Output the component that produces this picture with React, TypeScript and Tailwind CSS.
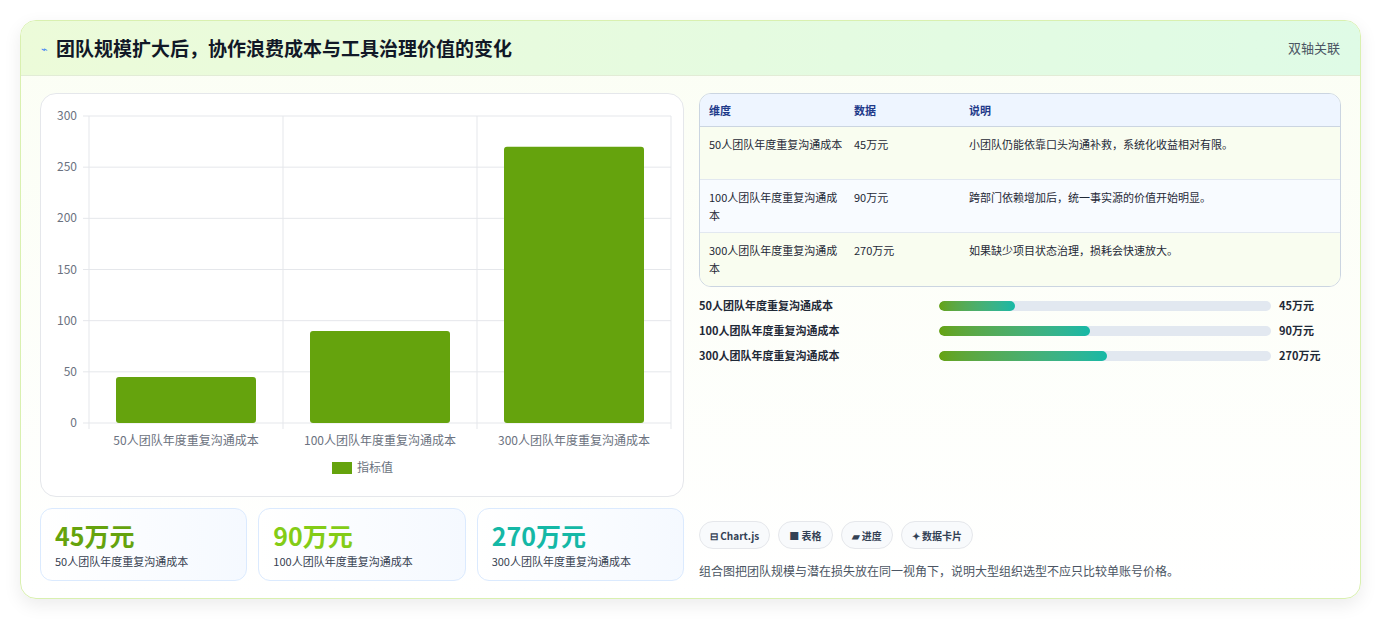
import React from "react";

const F = { fontFamily: '"Noto Sans CJK SC", "Noto Sans", sans-serif' };
const cats = ["50人团队年度重复沟通成本", "100人团队年度重复沟通成本", "300人团队年度重复沟通成本"];
const vals = [45, 90, 270];
const rows = [
  ["50人团队年度重复沟通成本", "45万元", "小团队仍能依靠口头沟通补救，系统化收益相对有限。"],
  ["100人团队年度重复沟通成本", "90万元", "跨部门依赖增加后，统一事实源的价值开始明显。"],
  ["300人团队年度重复沟通成本", "270万元", "如果缺少项目状态治理，损耗会快速放大。"],
];
const prog = [23, 45.5, 50.5];

function Chart() {
  const x0 = 48, x1 = 630, y0 = 22, y1 = 329;
  const ph = y1 - y0;
  const cw = (x1 - x0) / 3;
  return (
    <svg width="642" height="402" style={F}>
      {[0, 50, 100, 150, 200, 250, 300].map((t) => {
        const y = y1 - (t / 300) * ph;
        return (
          <g key={t}>
            <line x1={x0 - 6} x2={x1} y1={y} y2={y} stroke="#e5e7eb" />
            <text x={x0 - 12} y={y + 4} fontSize="12" fill="#6b7280" textAnchor="end">{t}</text>
          </g>
        );
      })}
      {[0, 1, 2, 3].map((i) => (
        <line key={i} x1={x0 + i * cw} x2={x0 + i * cw} y1={y0} y2={y1 + 6} stroke="#e5e7eb" />
      ))}
      {vals.map((v, i) => {
        const h = (v / 300) * ph;
        return (
          <g key={i}>
            <rect x={x0 + i * cw + 27} y={y1 - h} width={140} height={h} rx="3" fill="#65a30d" />
            <text x={x0 + i * cw + cw / 2} y={y1 + 22} fontSize="12" fill="#6b7280" textAnchor="middle">{cats[i]}</text>
          </g>
        );
      })}
      <rect x="291" y="368" width="20" height="12" fill="#65a30d" />
      <text x="316" y="378" fontSize="12" fill="#6b7280">指标值</text>
    </svg>
  );
}

export default function App() {
  return (
    <div className="w-[1381px] h-[621px] bg-white p-5" style={F}>
      <div className="rounded-2xl border border-[#d9f0b0] bg-gradient-to-b from-[#fbfef4] to-white shadow-[0_6px_18px_rgba(0,0,0,0.08)] overflow-hidden">
        <div className="h-[55px] flex items-center justify-between px-5 bg-gradient-to-r from-[#ecfbd9] to-[#dffbe6] border-b border-[#e2ecd6]">
          <div className="flex items-center gap-2">
            <span className="text-[11px] text-[#3b82f6]">⌁</span>
            <span className="text-[19px] font-bold text-[#111827]">团队规模扩大后，协作浪费成本与工具治理价值的变化</span>
          </div>
          <span className="text-[13px] text-[#4b5563]">双轴关联</span>
        </div>
        <div className="flex gap-[15px] px-[19px] pt-[17px] pb-[17px]">
          <div className="w-[644px] flex flex-col gap-[11px]">
            <div className="h-[404px] rounded-2xl border border-[#e5e7eb] bg-white">
              <Chart />
            </div>
            <div className="flex gap-[11px]">
              {["45万元", "90万元", "270万元"].map((v, i) => (
                <div key={i} className="flex-1 h-[73px] rounded-xl border border-[#dbeafe] bg-gradient-to-r from-white to-[#f5f9ff] px-[14px] pt-[9px]">
                  <div className={`text-[25px] font-bold leading-[34px] ${["text-[#65a30d]", "text-[#84cc16]", "text-[#14b8a6]"][i]}`}>{v}</div>
                  <div className="text-[11px] text-[#374151] mt-[1px]">{cats[i]}</div>
                </div>
              ))}
            </div>
          </div>
          <div className="flex-1 flex flex-col">
            <div className="rounded-xl border border-[#cbd5e1] overflow-hidden text-[11px]">
              <div className="flex h-[33px] items-center bg-[#eef5ff] border-b border-[#cbd5e1] font-bold text-[#1e3a8a]">
                <div className="w-[154px] pl-[9px]">维度</div>
                <div className="w-[115px]">数据</div>
                <div>说明</div>
              </div>
              {rows.map((r, i) => (
                <div key={i} className={`flex h-[53px] pt-[8px] text-[#1f2937] leading-[18px] ${i === 1 ? "bg-[#f8fbff]" : "bg-[#f9fdf0]"} ${i < 2 ? "border-b border-[#e2e8f0]" : ""}`}>
                  <div className="w-[154px] pl-[9px] pr-[6px]">{r[0]}</div>
                  <div className="w-[115px]">{r[1]}</div>
                  <div>{r[2]}</div>
                </div>
              ))}
            </div>
            <div className="flex flex-col gap-[12px] mt-[12px]">
              {rows.map((r, i) => (
                <div key={i} className="flex items-center h-[13px] text-[11px] font-bold text-[#1f2937]">
                  <div className="w-[240px]">{r[0]}</div>
                  <div className="w-[332px] h-[10px] rounded-full bg-[#e2e8f0] overflow-hidden">
                    <div className="h-full rounded-full bg-gradient-to-r from-[#65a30d] to-[#14b8a6]" style={{ width: `${prog[i]}%` }} />
                  </div>
                  <div className="ml-[8px]">{r[1]}</div>
                </div>
              ))}
            </div>
            <div className="flex-1" />
            <div className="flex gap-[8px]">
              {["⊟ Chart.js", "■ 表格", "▰ 进度", "✦ 数据卡片"].map((c) => (
                <div key={c} className="h-[28px] px-[10px] flex items-center rounded-full border border-[#e5e7eb] bg-[#f8fafc] text-[10px] font-bold text-[#334155]">{c}</div>
              ))}
            </div>
            <div className="mt-[12px] text-[12px] text-[#4b5563] leading-[20px]">组合图把团队规模与潜在损失放在同一视角下，说明大型组织选型不应只比较单账号价格。</div>
          </div>
        </div>
      </div>
    </div>
  );
}
